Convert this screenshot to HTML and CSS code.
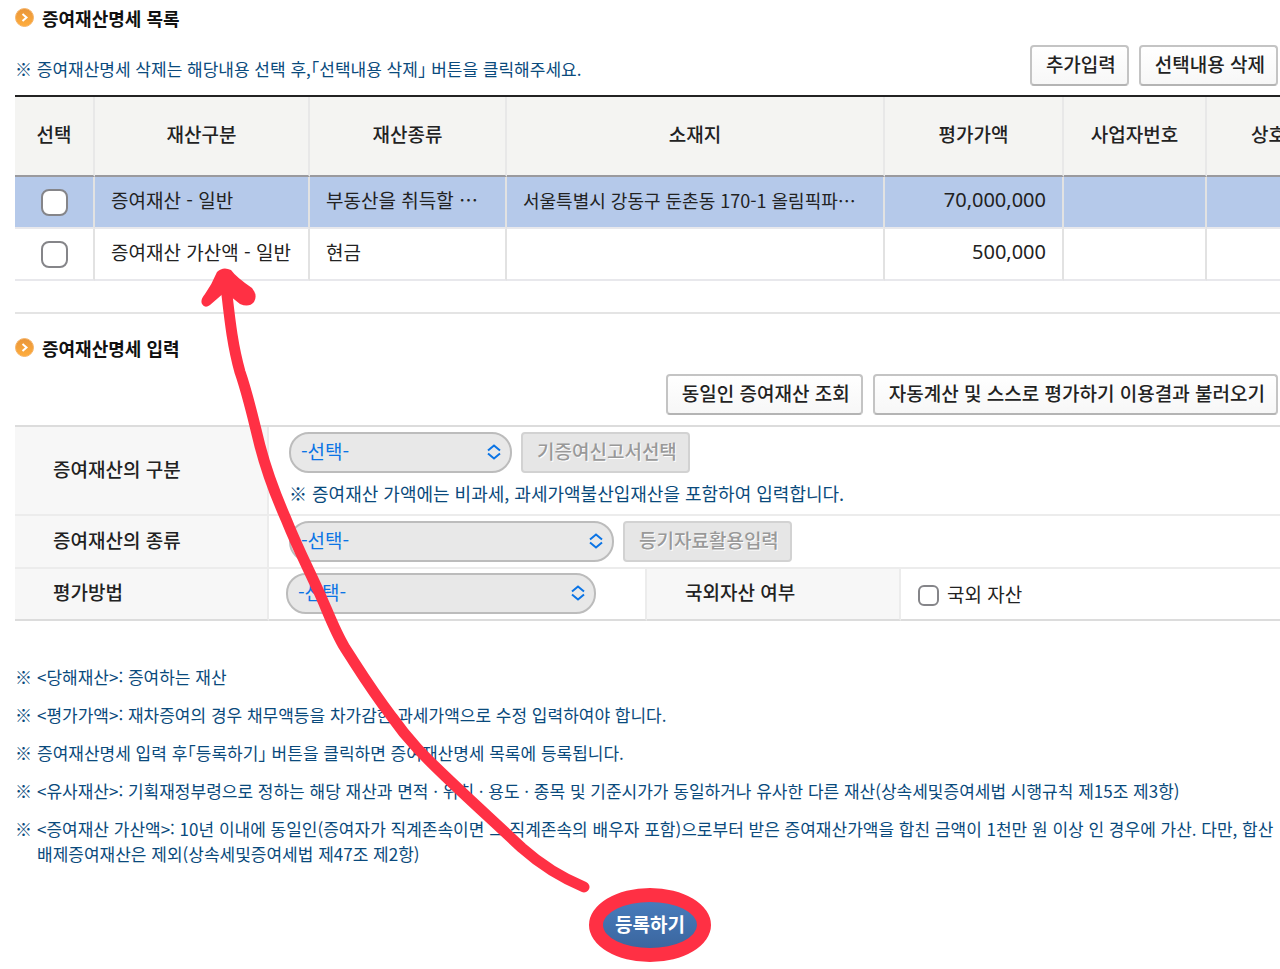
FILE: index.html
```html
<!DOCTYPE html>
<html lang="ko">

<head>
  <meta charset="utf-8">
  <title>증여재산명세</title>
  <link rel="stylesheet" href="styles.css">
</head>

<body>
  <svg class="defs" width="0" height="0" aria-hidden="true">
    <defs>
      <linearGradient id="orange" x1="0" y1="0" x2="0" y2="1">
        <stop offset="0" stop-color="#e8953a" />
        <stop offset="1" stop-color="#ffad3c" />
      </linearGradient>
      <symbol id="bullet" viewBox="0 0 20 20">
        <circle cx="9.500" cy="9.500" r="9" fill="url(#orange)" stroke="#f6b56a" stroke-width="1" />
        <path d="M7.500 6l4 3.500-4 3.500" fill="none" stroke="#fff" stroke-width="2" />
      </symbol>
      <symbol id="updown" viewBox="0 0 14 16">
        <path d="M1 6.500L7 1.500 13 6.500M1 9.500L7 14.500 13 9.500" fill="none" stroke="#0b74e5" stroke-width="2" />
      </symbol>
    </defs>
  </svg>

  <div class="page">
    <section class="list-section">
      <h2 class="title"><svg class="bullet"><use href="#bullet" /></svg>증여재산명세 목록</h2>
      <div class="toolbar">
        <p class="note">※ 증여재산명세 삭제는 해당내용 선택 후,「선택내용 삭제」 버튼을 클릭해주세요.</p>
        <div class="buttons">
          <button type="button" class="btn">추가입력</button>
          <button type="button" class="btn">선택내용 삭제</button>
        </div>
      </div>
      <div class="grid-wrap">
        <table class="grid">
          <colgroup>
            <col class="c-check">
            <col class="c-type">
            <col class="c-kind">
            <col>
            <col class="c-amount">
            <col class="c-bizno">
            <col class="c-name">
          </colgroup>
          <thead>
            <tr>
              <th>선택</th>
              <th>재산구분</th>
              <th>재산종류</th>
              <th>소재지</th>
              <th>평가가액</th>
              <th>사업자번호</th>
              <th>상호</th>
            </tr>
          </thead>
          <tbody>
            <tr class="selected">
              <td class="check"><input type="checkbox" class="box" aria-label="선택"></td>
              <td>증여재산 - 일반</td>
              <td>부동산을 취득할 ⋯</td>
              <td class="address">서울특별시 강동구 둔촌동 170-1 올림픽파⋯</td>
              <td class="amount">70,000,000</td>
              <td></td>
              <td></td>
            </tr>
            <tr>
              <td class="check"><input type="checkbox" class="box" aria-label="선택"></td>
              <td>증여재산 가산액 - 일반</td>
              <td>현금</td>
              <td class="address"></td>
              <td class="amount">500,000</td>
              <td></td>
              <td></td>
            </tr>
          </tbody>
        </table>
      </div>
    </section>

    <section class="form-section">
      <h2 class="title"><svg class="bullet"><use href="#bullet" /></svg>증여재산명세 입력</h2>
      <div class="buttons form-buttons">
        <button type="button" class="btn">동일인 증여재산 조회</button>
        <button type="button" class="btn">자동계산 및 스스로 평가하기 이용결과 불러오기</button>
      </div>
      <table class="form">
        <colgroup>
          <col class="c-label">
          <col class="c-field">
          <col class="c-label">
          <col>
        </colgroup>
        <tr>
          <th><label for="gubun">증여재산의 구분</label></th>
          <td colspan="3">
            <div class="field">
              <div class="select select-s">
                <select id="gubun"><option>-선택-</option></select>
                <svg class="updown"><use href="#updown" /></svg>
              </div>
              <button type="button" class="btn" disabled>기증여신고서선택</button>
            </div>
            <p class="hint">※ 증여재산 가액에는 비과세, 과세가액불산입재산을 포함하여 입력합니다.</p>
          </td>
        </tr>
        <tr>
          <th><label for="kind">증여재산의 종류</label></th>
          <td colspan="3">
            <div class="field">
              <div class="select select-l">
                <select id="kind"><option>-선택-</option></select>
                <svg class="updown"><use href="#updown" /></svg>
              </div>
              <button type="button" class="btn" disabled>등기자료활용입력</button>
            </div>
          </td>
        </tr>
        <tr>
          <th><label for="method">평가방법</label></th>
          <td class="tight split">
            <div class="field">
              <div class="select select-m">
                <select id="method"><option>-선택-</option></select>
                <svg class="updown"><use href="#updown" /></svg>
              </div>
            </div>
          </td>
          <th>국외자산 여부</th>
          <td class="tight">
            <label class="foreign"><input type="checkbox" class="box box-s">국외 자산</label>
          </td>
        </tr>
      </table>
    </section>

    <ul class="notes">
      <li>&lt;당해재산&gt;: 증여하는 재산</li>
      <li>&lt;평가가액&gt;: 재차증여의 경우 채무액등을 차가감한 과세가액으로 수정 입력하여야 합니다.</li>
      <li>증여재산명세 입력 후「등록하기」 버튼을 클릭하면 증여재산명세 목록에 등록됩니다.</li>
      <li>&lt;유사재산&gt;: 기획재정부령으로 정하는 해당 재산과 면적 · 위치 · 용도 · 종목 및 기준시가가 동일하거나 유사한 다른 재산(상속세및증여세법 시행규칙 제15조 제3항)</li>
      <li>&lt;증여재산 가산액&gt;: 10년 이내에 동일인(증여자가 직계존속이면 그 직계존속의 배우자 포함)으로부터 받은 증여재산가액을 합친 금액이 1천만 원 이상 인 경우에 가산. 다만, 합산배제증여재산은 제외(상속세및증여세법 제47조 제2항)</li>
    </ul>

    <div class="submit">
      <button type="button" class="btn-submit">등록하기</button>
    </div>

    <!-- hand drawn arrow -->
    <svg class="arrow" width="420" height="640" viewBox="190 260 420 640" aria-hidden="true">
      <path d="M584 887C560 877 540 864 522 848C490 818 470 800 446 777C425 757 408 740 392 717C370 688 360 671 345 648C334 630 327 609 318 590C309 570 298 549 286 519C275 494 267 473 260 446C252 414 248 395 240 372C231 340 229 310 225 278" fill="none" stroke="#ff3044" stroke-width="11" stroke-linecap="round" />
      <path d="M217 272Q223 266 231 270Q236 277 252 288Q258 295 254 302Q249 308 240 304L225 292L210 305Q205 309 202 304Q200 300 205 294Q212 284 217 272Z" fill="#ff3044" />
    </svg>
  </div>
</body>

</html>
```

FILE: styles.css
```css
* {
  box-sizing: border-box;
}

body {
  margin: 0;
  background: #fff;
  color: #222;
  font-family: "Noto Sans CJK KR", sans-serif;
  font-size: 19px;
  line-height: 24px;
}

p, ul, h2 {
  margin: 0;
  padding: 0;
}

button, select {
  font-family: inherit;
  font-size: inherit;
}

.defs {
  position: absolute;
}

.page {
  position: relative;
  padding: 6px 0 0 15px;
  overflow: hidden;
}

.title {
  display: flex;
  align-items: center;
  gap: 7px;
  height: 24px;
  font-size: 18px;
  font-weight: 700;
  color: #111;
}

.bullet {
  width: 20px;
  height: 20px;
}

/* buttons */
.buttons {
  display: flex;
  justify-content: flex-end;
  gap: 10px;
  padding-right: 2px;
}

.btn {
  height: 41px;
  padding: 0 11px 4px 14px;
  border: 2px solid #c4c4c4;
  border-bottom-color: #b4b4b4;
  border-radius: 4px;
  background: linear-gradient(#fff, #f7f7f7);
  color: #222;
  font-weight: 500;
  white-space: nowrap;
}

.btn:disabled {
  border-color: #d2d2d2;
  background: #e6e6e6;
  color: #999;
  text-shadow: 1px 1px 0 #fff;
}

.toolbar {
  display: flex;
  justify-content: space-between;
  align-items: center;
  margin-top: 15px;
}

.note {
  padding-top: 6px;
  font-size: 17px;
  font-feature-settings: "halt" 1;
  color: #0a4a7c;
}

/* property list */
.grid-wrap {
  margin-top: 9px;
  padding-bottom: 31px;
  border-bottom: 2px solid #e4e4e4;
  overflow: hidden;
}

.grid {
  width: calc(100% + 52px);
  table-layout: fixed;
  border-collapse: separate;
  border-spacing: 0;
  border-top: 2px solid #222;
}

.c-check { width: 80px; }
.c-type { width: 215px; }
.c-kind { width: 197px; }
.c-amount { width: 179px; }
.c-bizno { width: 143px; }
.c-name { width: 125px; }

.grid th {
  height: 80px;
  padding: 0 0 4px;
  border-right: 2px solid #e8e8e8;
  border-bottom: 2px solid #9a9a9e;
  background: #f4f4f2;
  font-weight: 500;
}

.grid td {
  height: 52px;
  padding: 0 16px 4px;
  border-right: 2px solid #e2e2e2;
  border-bottom: 2px solid #e8e8ec;
  white-space: nowrap;
}

.grid .check {
  padding: 0;
  text-align: center;
}

.grid .address {
  font-size: 18px;
}

.grid .amount {
  font-family: "Noto Sans", sans-serif;
  font-size: 20px;
  text-align: right;
}

.selected td {
  background: #b5c9ea;
}

.box {
  appearance: none;
  display: block;
  width: 27px;
  height: 27px;
  margin: 0 auto;
  border: 2px solid #858589;
  border-radius: 8px;
  background: #fff;
}

.box-s {
  width: 21px;
  height: 21px;
  margin: 3px 0 0;
  border-radius: 6px;
}

/* input form */
.form-section {
  padding-top: 22px;
}

.form-buttons {
  margin-top: 14px;
}

.form {
  width: 100%;
  margin-top: 10px;
  table-layout: fixed;
  border-collapse: separate;
  border-spacing: 0;
  border-top: 2px solid #dcdcdc;
}

.c-label { width: 254px; }
.c-field { width: 378px; }

.form th {
  padding: 0 0 4px 38px;
  border-right: 2px solid #ececec;
  border-bottom: 2px solid #ececec;
  background: #f7f7f7;
  font-weight: 500;
  text-align: left;
}

.form td {
  padding: 5px 0 5px 20px;
  border-bottom: 2px solid #ececec;
}

.form tr:last-child th,
.form tr:last-child td {
  border-bottom-color: #dcdcdc;
}

.form .tight {
  padding-top: 4px;
  padding-left: 17px;
}

.form .split {
  border-right: 2px solid #ececec;
}

.field {
  display: flex;
  gap: 9px;
}

.select {
  position: relative;
}

.select select {
  appearance: none;
  width: 100%;
  height: 41px;
  padding: 0 10px 4px;
  border: 2px solid #bcbcbc;
  border-radius: 20px;
  background: #e8e8e8;
  color: #0b74e5;
}

.select-s { width: 223px; }
.select-m { width: 310px; }
.select-l { width: 325px; }

.updown {
  position: absolute;
  top: 12px;
  right: 11px;
  width: 14px;
  height: 16px;
}

.hint {
  padding: 8px 0 4px;
  font-size: 18px;
  color: #0a4a7c;
}

.foreign {
  display: flex;
  align-items: center;
  gap: 8px;
}

/* notes */
.notes {
  margin-top: 43px;
  padding-right: 4px;
  list-style: none;
  font-size: 17px;
  line-height: 25px;
  font-feature-settings: "halt" 1;
  color: #0a4a7c;
}

.notes li {
  position: relative;
  margin-bottom: 13px;
  padding-left: 22px;
  word-break: break-all;
}

.notes li::before {
  content: "※";
  position: absolute;
  left: 0;
}

.submit {
  margin-top: 22px;
  padding-left: 5px;
  text-align: center;
}

.btn-submit {
  width: 122px;
  height: 74px;
  padding: 0 0 4px;
  border: 14px solid #ff3044;
  border-radius: 50%;
  background: linear-gradient(#477bbb, #3b669f);
  color: #fff;
  font-weight: 700;
}

.arrow {
  position: absolute;
  top: 260px;
  left: 190px;
}
```
